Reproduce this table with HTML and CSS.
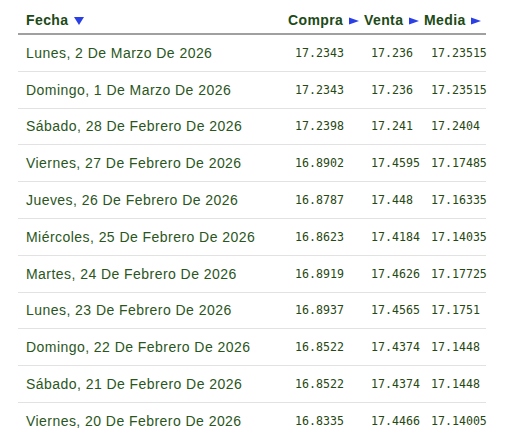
FILE: index.html
```html
<!DOCTYPE html>
<html lang="es">
<head>
<meta charset="utf-8">
<title>Tipo de cambio</title>
<link rel="stylesheet" href="styles.css">
</head>
<body>
<table class="rates">
  <colgroup>
    <col class="c-date">
    <col class="c-buy">
    <col class="c-sell">
    <col class="c-mid">
  </colgroup>
  <thead>
    <tr>
      <th class="h-date">Fecha <svg class="tri" width="10" height="8" viewBox="0 0 10 8"><polygon points="0,0 10,0 5,8"/></svg></th>
      <th class="h-num">Compra <svg class="tri" width="10" height="8" viewBox="0 0 10 8"><polygon points="0,0.5 10,4 0,7.5"/></svg></th>
      <th class="h-num">Venta <svg class="tri" width="10" height="8" viewBox="0 0 10 8"><polygon points="0,0.5 10,4 0,7.5"/></svg></th>
      <th class="h-num">Media <svg class="tri" width="10" height="8" viewBox="0 0 10 8"><polygon points="0,0.5 10,4 0,7.5"/></svg></th>
    </tr>
  </thead>
  <tbody>
    <tr><td class="d">Lunes, 2 De Marzo De 2026</td><td class="n">17.2343</td><td class="n">17.236</td><td class="n">17.23515</td></tr>
    <tr><td class="d">Domingo, 1 De Marzo De 2026</td><td class="n">17.2343</td><td class="n">17.236</td><td class="n">17.23515</td></tr>
    <tr><td class="d">Sábado, 28 De Febrero De 2026</td><td class="n">17.2398</td><td class="n">17.241</td><td class="n">17.2404</td></tr>
    <tr><td class="d">Viernes, 27 De Febrero De 2026</td><td class="n">16.8902</td><td class="n">17.4595</td><td class="n">17.17485</td></tr>
    <tr><td class="d">Jueves, 26 De Febrero De 2026</td><td class="n">16.8787</td><td class="n">17.448</td><td class="n">17.16335</td></tr>
    <tr><td class="d">Miércoles, 25 De Febrero De 2026</td><td class="n">16.8623</td><td class="n">17.4184</td><td class="n">17.14035</td></tr>
    <tr><td class="d">Martes, 24 De Febrero De 2026</td><td class="n">16.8919</td><td class="n">17.4626</td><td class="n">17.17725</td></tr>
    <tr><td class="d">Lunes, 23 De Febrero De 2026</td><td class="n">16.8937</td><td class="n">17.4565</td><td class="n">17.1751</td></tr>
    <tr><td class="d">Domingo, 22 De Febrero De 2026</td><td class="n">16.8522</td><td class="n">17.4374</td><td class="n">17.1448</td></tr>
    <tr><td class="d">Sábado, 21 De Febrero De 2026</td><td class="n">16.8522</td><td class="n">17.4374</td><td class="n">17.1448</td></tr>
    <tr><td class="d">Viernes, 20 De Febrero De 2026</td><td class="n">16.8335</td><td class="n">17.4466</td><td class="n">17.14005</td></tr>
  </tbody>
</table>
</body>
</html>
```

FILE: styles.css
```css
html, body {
  margin: 0;
  padding: 0;
  background: #ffffff;
}

body {
  padding: 6px 0 0 18px;
  font-family: "Liberation Sans", Arial, sans-serif;
}

.rates {
  width: 468px;
  table-layout: fixed;
  border-collapse: collapse;
  border-spacing: 0;
}

.c-date { width: 266px; }
.c-buy { width: 76px; }
.c-sell { width: 60px; }
.c-mid { width: 66px; }

.rates th {
  height: 27px;
  padding: 0;
  text-align: left;
  font-size: 14px;
  font-weight: bold;
  letter-spacing: 0.4px;
  color: #1c4a16;
  border-bottom: 2px solid #a0a0a0;
  white-space: nowrap;
  vertical-align: middle;
}

.h-date { padding-left: 8px !important; }
.h-num { padding-left: 4px !important; }

.tri {
  fill: #2b3fe6;
  margin-left: 1px;
  vertical-align: 0px;
}

.rates td {
  height: 35.8px;
  padding: 0;
  border-bottom: 1px solid #e2e2e2;
  white-space: nowrap;
  vertical-align: middle;
}

.d {
  padding-left: 8px !important;
  font-size: 14px;
  letter-spacing: 0.45px;
  color: #2a561c;
}

.n {
  padding-left: 11px !important;
  font-family: "DejaVu Sans Mono", "Liberation Mono", monospace;
  font-size: 11.6px;
  color: #264812;
}
```
